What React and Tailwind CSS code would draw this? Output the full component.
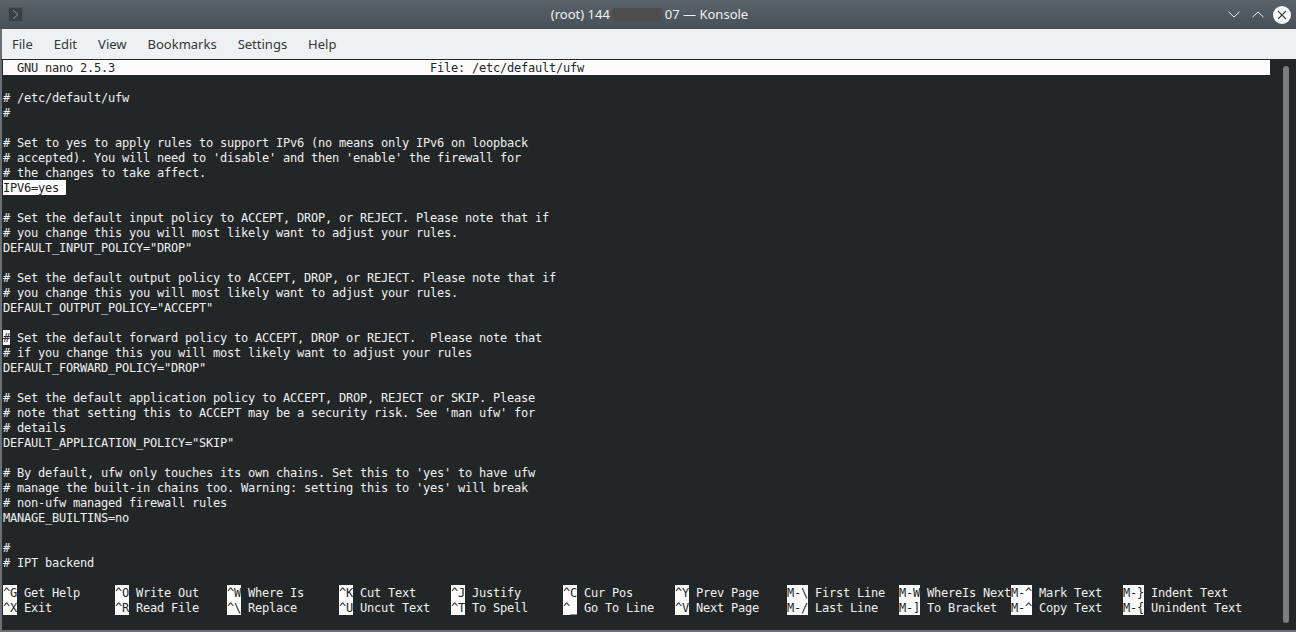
const menuItems = ["File", "Edit", "View", "Bookmarks", "Settings", "Help"];

const fileLines = [
  "",
  "# /etc/default/ufw",
  "#",
  "",
  "# Set to yes to apply rules to support IPv6 (no means only IPv6 on loopback",
  "# accepted). You will need to 'disable' and then 'enable' the firewall for",
  "# the changes to take affect.",
  "IPV6",
  "",
  "# Set the default input policy to ACCEPT, DROP, or REJECT. Please note that if",
  "# you change this you will most likely want to adjust your rules.",
  'DEFAULT_INPUT_POLICY="DROP"',
  "",
  "# Set the default output policy to ACCEPT, DROP, or REJECT. Please note that if",
  "# you change this you will most likely want to adjust your rules.",
  'DEFAULT_OUTPUT_POLICY="ACCEPT"',
  "",
  "CURSOR",
  "# if you change this you will most likely want to adjust your rules",
  'DEFAULT_FORWARD_POLICY="DROP"',
  "",
  "# Set the default application policy to ACCEPT, DROP, REJECT or SKIP. Please",
  "# note that setting this to ACCEPT may be a security risk. See 'man ufw' for",
  "# details",
  'DEFAULT_APPLICATION_POLICY="SKIP"',
  "",
  "# By default, ufw only touches its own chains. Set this to 'yes' to have ufw",
  "# manage the built-in chains too. Warning: setting this to 'yes' will break",
  "# non-ufw managed firewall rules",
  "MANAGE_BUILTINS=no",
  "",
  "#",
  "# IPT backend",
  "",
];

const helpTop = [
  ["^G", "Get Help"],
  ["^O", "Write Out"],
  ["^W", "Where Is"],
  ["^K", "Cut Text"],
  ["^J", "Justify"],
  ["^C", "Cur Pos"],
  ["^Y", "Prev Page"],
  ["M-\\", "First Line"],
  ["M-W", "WhereIs Next"],
  ["M-^", "Mark Text"],
  ["M-}", "Indent Text"],
];

const helpBottom = [
  ["^X", "Exit"],
  ["^R", "Read File"],
  ["^\\", "Replace"],
  ["^U", "Uncut Text"],
  ["^T", "To Spell"],
  ["^_", "Go To Line"],
  ["^V", "Next Page"],
  ["M-/", "Last Line"],
  ["M-]", "To Bracket"],
  ["M-^", "Copy Text"],
  ["M-{", "Unindent Text"],
];

function Inverse({ children }) {
  return <span className="inline-block h-[15px] bg-[#fcfcfc] text-[#232627]">{children}</span>;
}

function FileLine({ text }) {
  if (text === "IPV6") {
    return (
      <div className="h-[15px]">
        <Inverse>IPV6=yes </Inverse>
      </div>
    );
  }
  if (text === "CURSOR") {
    return (
      <div className="h-[15px]">
        <Inverse>#</Inverse>
        {" Set the default forward policy to ACCEPT, DROP or REJECT.  Please note that"}
      </div>
    );
  }
  return <div className="h-[15px]">{text}</div>;
}

function HelpRow({ items }) {
  return (
    <div className="flex h-[15px]">
      {items.map(([key, label], i) => (
        <div key={i} className="w-[112px] shrink-0">
          <Inverse>{key}</Inverse>
          {" " + label}
        </div>
      ))}
    </div>
  );
}

export default function App() {
  return (
    <div className="w-[1296px] h-[632px] overflow-hidden flex flex-col bg-[#232627] font-['Noto_Sans',sans-serif]">
      {/* TITLE BAR */}
      <div className="h-[29px] shrink-0 flex items-center pl-[8px] pr-[5px] bg-gradient-to-b from-[#5a636c] to-[#475057]">
        <div className="w-[70px] shrink-0">
          <div className="w-[15px] h-[15px] flex items-center justify-center bg-[#3a4045] border border-[#4c5359]">
            <svg width="9" height="11" viewBox="0 0 9 11" fill="none" stroke="#8e979e" strokeWidth="1">
              <path d="M2 1l5 4.5L2 10" />
            </svg>
          </div>
        </div>
        <div className="flex-1 flex items-center justify-center text-[13px] text-[#eff0f1] whitespace-pre">
          <span>(root) 144</span>
          <span className="w-[53px] h-[14px] mx-[1px] bg-[#4d4d4d] [clip-path:polygon(3px_0,50px_0,100%_50%,50px_100%,3px_100%,0_50%)]"></span>
          <span>07 — Konsole</span>
        </div>
        <div className="w-[70px] shrink-0 flex items-center justify-end">
          <svg width="12" height="7" viewBox="0 0 12 7" fill="none" stroke="#eff0f1" strokeWidth="1" className="mr-[12px]">
            <path d="M0.5 0.8L6 6l5.5-5.2" />
          </svg>
          <svg width="12" height="7" viewBox="0 0 12 7" fill="none" stroke="#eff0f1" strokeWidth="1" className="mr-[9px]">
            <path d="M0.5 6.2L6 1l5.5 5.2" />
          </svg>
          <div className="w-[18px] h-[18px] rounded-full bg-[#fcfcfc] flex items-center justify-center">
            <svg width="10" height="10" viewBox="0 0 10 10" fill="none" stroke="#3a4045" strokeWidth="1.1">
              <path d="M1 1l8 8M9 1l-8 8" />
            </svg>
          </div>
        </div>
      </div>

      {/* MENU */}
      <div className="h-[30px] shrink-0 flex items-center gap-[21px] pl-[10px] pt-[2px] bg-[#eff0f1] text-[13px] text-[#31363b] border-l-2 border-[#6b7075]">
        {menuItems.map((item) => (
          <span key={item}>{item}</span>
        ))}
      </div>

      {/* TERMINAL */}
      <div className="flex-1 min-h-0 flex border-t border-[#232627] border-l-2 border-l-[#6b7075] border-b-2 border-b-[#6b7075] bg-[#232627]">
        <div className="w-[1268px] shrink-0 pl-[1px] font-['DejaVu_Sans_Mono',monospace] text-[12px] leading-[17px] tracking-[-0.224px] text-[#eff0f1] whitespace-pre">
          <div className="h-[15px] flex bg-[#fcfcfc] text-[#232627]">
            <span className="w-[427px] pl-[14px]">GNU nano 2.5.3</span>
            <span>File: /etc/default/ufw</span>
          </div>
          {fileLines.map((line, i) => (
            <FileLine key={i} text={line} />
          ))}
          <HelpRow items={helpTop} />
          <HelpRow items={helpBottom} />
        </div>
        {/* SCROLLBAR */}
        <div className="w-[6px] ml-[13px] mt-[6px] mb-[7px] rounded-[3px] bg-[#7b7e80]"></div>
      </div>
    </div>
  );
}
